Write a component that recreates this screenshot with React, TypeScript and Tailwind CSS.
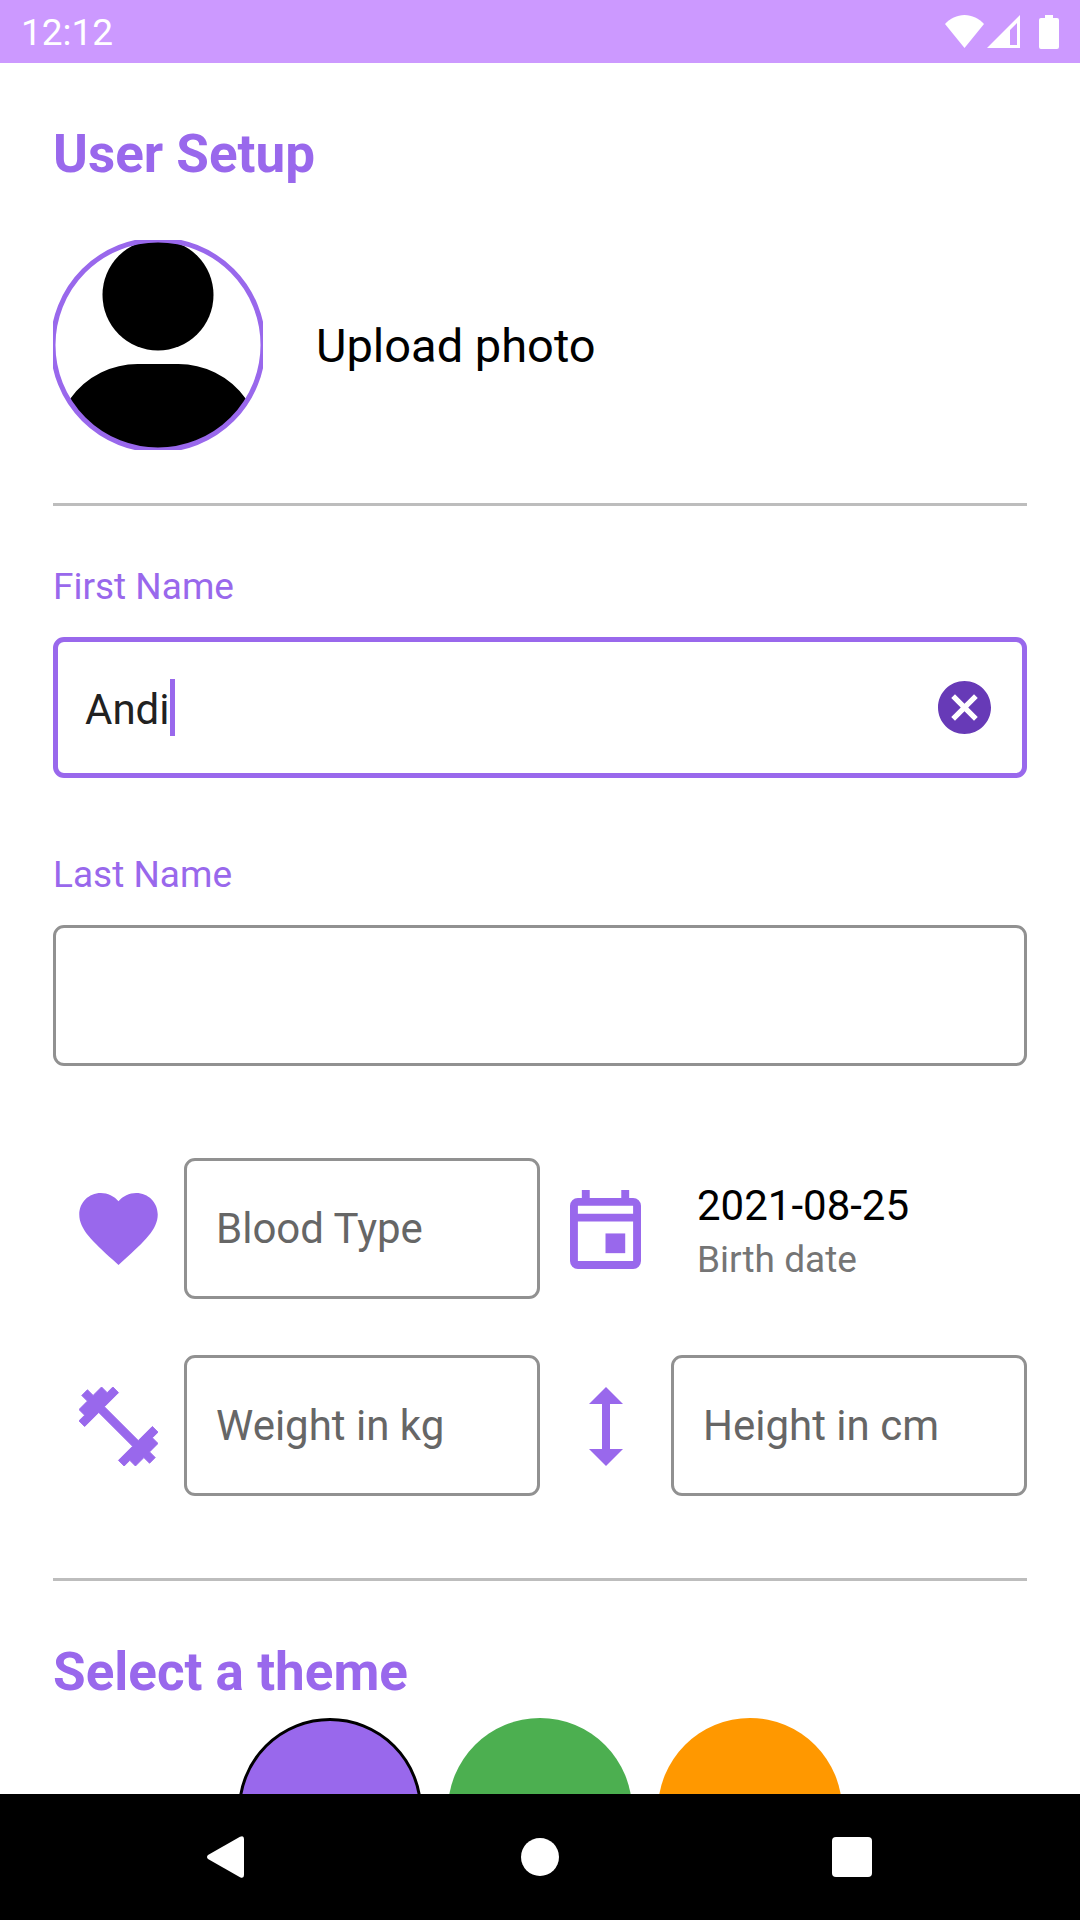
import { useState } from "react";

const icon = "fill-[#9968ec]";
const fieldBox =
  "h-[141px] w-full min-w-0 rounded-[11px] border-[3px] border-[#919191] bg-white px-[29px] text-[42px] text-[#212121] outline-none placeholder:text-[#666666] placeholder:opacity-100";

function StatusBar() {
  return (
    <header className="flex h-[63px] shrink-0 items-center justify-between bg-[#cc99ff] px-[21px] text-white">
      <time className="pt-[2px] text-[37px] leading-none">12:12</time>
      <div className="flex items-center">
        <svg className="h-[33px] w-[39px]" viewBox="0 0 39 33" fill="currentColor" role="img" aria-label="Wi-Fi">
          <path d="M19.5 33 0 9C5 3.600 12 0 19.500 0S34 3.600 39 9z" />
        </svg>
        <svg className="ml-[3px] h-[33px] w-[33px]" viewBox="0 0 33 33" fill="currentColor" role="img" aria-label="Signal">
          <path fillRule="evenodd" d="M33 0v33H0zM30 8l-7 7v15h7z" />
        </svg>
        <svg className="ml-[19px] h-[34px] w-5" viewBox="0 0 20 34" fill="currentColor" role="img" aria-label="Battery">
          <path d="M6 0h8v3h4a2 2 0 0 1 2 2v27a2 2 0 0 1-2 2H2a2 2 0 0 1-2-2V5a2 2 0 0 1 2-2h4z" />
        </svg>
      </div>
    </header>
  );
}

function Avatar() {
  return (
    <svg className="size-[210px]" viewBox="0 0 210 210" aria-hidden="true">
      <defs>
        <clipPath id="avatar-clip">
          <circle cx="105" cy="105" r="104" />
        </clipPath>
      </defs>
      <g clipPath="url(#avatar-clip)">
        <circle cx="105" cy="55" r="55.500" />
        <path d="M0 210v-30L17 159A83 83 0 0 1 88 124h34a83 83 0 0 1 71 35l17 21v30z" />
      </g>
      <circle cx="105" cy="105" r="105" fill="none" stroke="#9968ec" strokeWidth="5" />
    </svg>
  );
}

function HeartIcon() {
  return (
    <svg className={`h-[72px] w-[79px] ${icon}`} viewBox="2 3 20 18.350" aria-hidden="true">
      <path d="m12 21.350-1.450-1.320C5.400 15.360 2 12.280 2 8.500 2 5.420 4.420 3 7.500 3c1.740 0 3.410.810 4.500 2.090C13.090 3.810 14.760 3 16.500 3 19.580 3 22 5.420 22 8.500c0 3.780-3.400 6.860-8.550 11.540z" />
    </svg>
  );
}

function CalendarIcon() {
  return (
    <svg className={`h-[79px] w-[71px] ${icon}`} viewBox="3 1 18 20" aria-hidden="true">
      <path d="M12 12h5v5h-5z" />
      <path
        fillRule="evenodd"
        d="M16 1v2H8V1H6v2H5a2 2 0 0 0-2 2v14a2 2 0 0 0 2 2h14a2 2 0 0 0 2-2V5a2 2 0 0 0-2-2h-1V1zM5 5h14v2H5zM5 9h14v10H5z"
      />
    </svg>
  );
}

function DumbbellIcon() {
  return (
    <svg
      className={`size-[79px] stroke-[#9968ec] ${icon}`}
      viewBox="2 2 20 20"
      strokeWidth="0.25"
      strokeLinejoin="round"
      aria-hidden="true"
    >
      <path d="M20.57 14.86 22 13.43 20.57 12 17 15.57 8.43 7 12 3.43 10.57 2 9.14 3.43 7.71 2 5.57 4.14 4.14 2.71 2.71 4.14l1.43 1.43L2 7.71l1.43 1.43L2 10.57 3.43 12 7 8.43 15.57 17 12 20.57 13.43 22l1.43-1.43L16.29 22l2.14-2.14 1.43 1.43 1.43-1.43-1.43-1.43L22 16.29z" />
    </svg>
  );
}

function HeightIcon() {
  return (
    <svg className={`h-[79px] w-[34px] ${icon}`} viewBox="0 0 34 79" aria-hidden="true">
      <path d="m17 0 17 17H21v45h13L17 79 0 62h13V17H0z" />
    </svg>
  );
}

const themes = [
  { name: "Purple", style: "bg-[#9968ec]" },
  { name: "Green", style: "bg-[#4caf50]" },
  { name: "Orange", style: "bg-[#ff9800]" },
];

export default function App() {
  const [firstName, setFirstName] = useState("Andi");
  const [theme, setTheme] = useState("Purple");

  return (
    <div className="flex h-screen flex-col bg-white font-[Roboto,sans-serif] text-black">
      <StatusBar />

      <main className="min-h-0 flex-1 overflow-y-auto px-[53px] pt-[60px] [scrollbar-width:none]">
        <h1 className="text-[53px] leading-[62px] font-bold text-[#9968ec]">User Setup</h1>

        <button type="button" className="mt-[55px] flex items-center gap-[53px] text-[47px]">
          <Avatar />
          <span className="pt-[3px]">Upload photo</span>
        </button>

        <hr className="mt-[53px] border-t-[3px] border-[#bdbdbd]" />

        <form>
          <label htmlFor="first-name" className="mt-[59px] block text-[37px] leading-[43px] text-[#9968ec]">
            First Name
          </label>
          <div className="mt-[29px] flex h-[141px] items-center rounded-[11px] border-[5px] border-[#9968ec] pr-[31px] pl-[27px]">
            <input
              id="first-name"
              value={firstName}
              onChange={(e) => setFirstName(e.target.value)}
              className="field-sizing-content pt-[3px] text-[42px] text-[#212121] caret-transparent outline-none"
            />
            <span className="h-[57px] w-[5px] bg-[#9968ec]" />
            <button type="button" aria-label="Clear first name" className="ml-auto" onClick={() => setFirstName("")}>
              <svg className="size-[53px] fill-[#673ab7]" viewBox="2 2 20 20" aria-hidden="true">
                <path d="M12 2C6.470 2 2 6.470 2 12s4.470 10 10 10 10-4.470 10-10S17.530 2 12 2zm5 13.590L15.590 17 12 13.410 8.410 17 7 15.590 10.590 12 7 8.410 8.410 7 12 10.590 15.590 7 17 8.410 13.410 12z" />
              </svg>
            </button>
          </div>

          <label htmlFor="last-name" className="mt-[75px] block text-[37px] leading-[43px] text-[#9968ec]">
            Last Name
          </label>
          <input id="last-name" className={`mt-[29px] block ${fieldBox}`} />

          <div className="mt-[92px] grid grid-cols-[131px_minmax(0,1fr)_131px_minmax(0,1fr)] items-center gap-y-[56px]">
            <label htmlFor="blood-type" aria-label="Blood Type" className="flex justify-center">
              <HeartIcon />
            </label>
            <input id="blood-type" placeholder="Blood Type" className={fieldBox} />
            <span className="flex justify-center pt-[2px]">
              <CalendarIcon />
            </span>
            <button type="button" className="flex flex-col gap-2 pt-1 pl-[26px] text-left">
              <span className="text-[42px] leading-[49px]">2021-08-25</span>
              <span className="text-[37px] leading-[43px] text-[#757575]">Birth date</span>
            </button>

            <label htmlFor="weight" aria-label="Weight in kg" className="flex justify-center pt-[2px]">
              <DumbbellIcon />
            </label>
            <input id="weight" inputMode="decimal" placeholder="Weight in kg" className={fieldBox} />
            <label htmlFor="height" aria-label="Height in cm" className="flex justify-center pt-[2px]">
              <HeightIcon />
            </label>
            <input id="height" inputMode="decimal" placeholder="Height in cm" className={fieldBox} />
          </div>

          <hr className="mt-[82px] border-t-[3px] border-[#bdbdbd]" />

          <h2 id="theme-heading" className="mt-[60px] text-[53px] leading-[62px] font-bold text-[#9968ec]">
            Select a theme
          </h2>
          <div role="radiogroup" aria-labelledby="theme-heading" className="mt-[15px] flex justify-center gap-[26px]">
            {themes.map(({ name, style }) => (
              <input
                key={name}
                type="radio"
                name="theme"
                aria-label={name}
                checked={theme === name}
                onChange={() => setTheme(name)}
                className={`size-[184px] appearance-none rounded-full border-black checked:border-[3px] ${style}`}
              />
            ))}
          </div>
        </form>
      </main>

      <nav className="grid h-[126px] shrink-0 grid-cols-3 bg-black px-[72px]">
        <button type="button" aria-label="Back" className="flex items-center justify-center">
          <svg className="h-[42px] w-[44px] fill-white" viewBox="0 0 44 42" aria-hidden="true">
            <path d="M2 19 34 .800Q38-1 38 3v36q0 4-4 2.200L2 23q-2-2 0-4z" />
          </svg>
        </button>
        <button type="button" aria-label="Home" className="flex items-center justify-center">
          <span className="size-[38px] rounded-full bg-white" />
        </button>
        <button type="button" aria-label="Recent apps" className="flex items-center justify-center">
          <span className="size-[40px] rounded-[4px] bg-white" />
        </button>
      </nav>
    </div>
  );
}
